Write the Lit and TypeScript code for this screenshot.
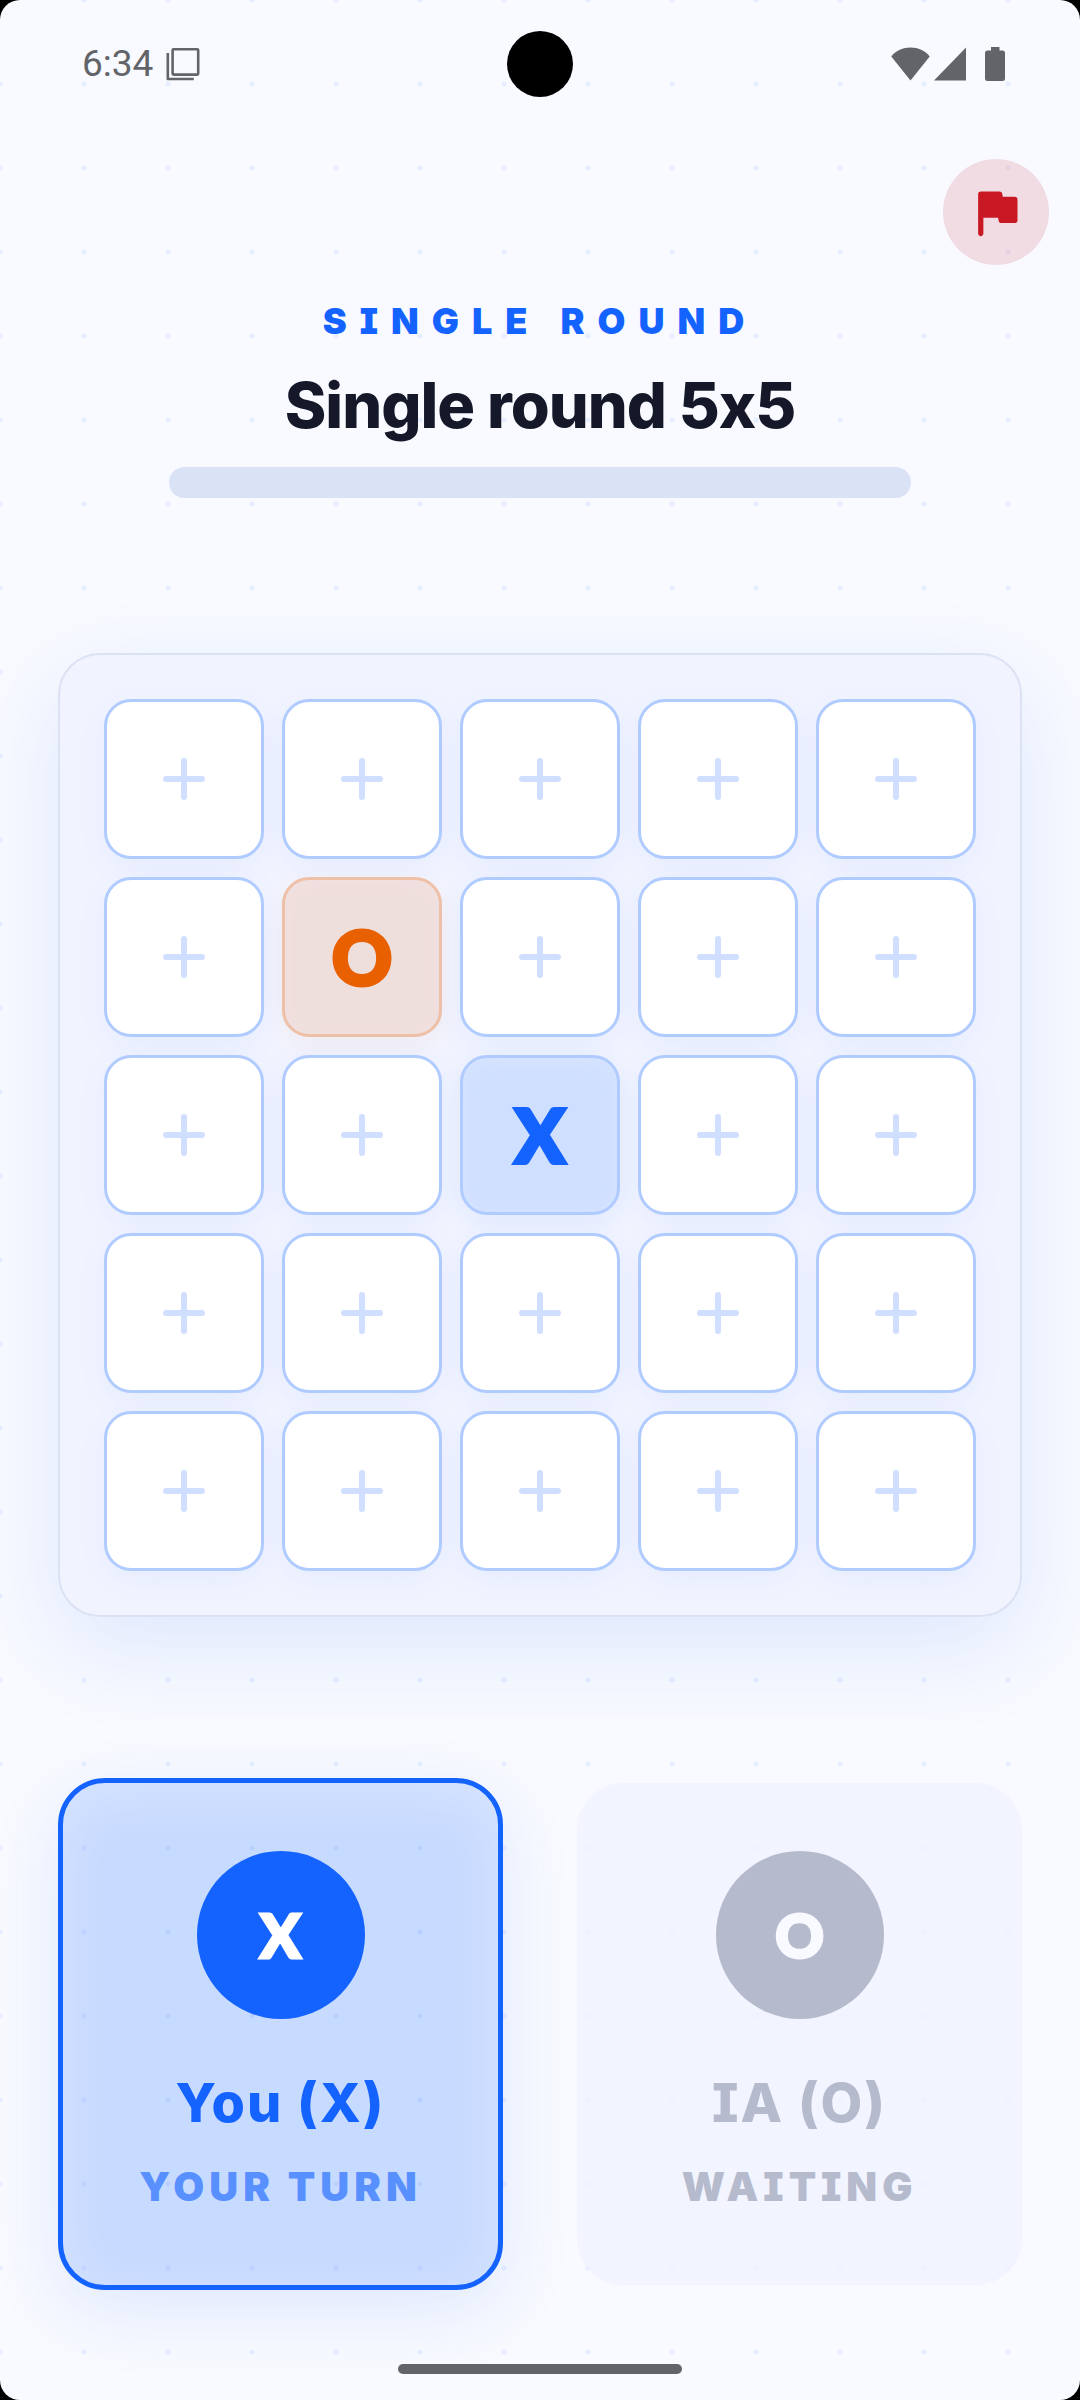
import { LitElement, html, css, svg } from "lit";
import { customElement, property, state } from "lit/decorators.js";
import { classMap } from "lit/directives/class-map.js";

type Mark = "X" | "O" | "";

const SIZE = 5;

@customElement("status-bar")
export class StatusBar extends LitElement {
  static styles = css`
    :host {
      display: grid;
      grid-template-columns: 1fr auto 1fr;
      align-items: center;
      height: 128px;
      padding: 0 75px;
      box-sizing: border-box;
      color: #636469;
      font: 400 37px/44px Roboto, "Liberation Sans", sans-serif;
    }
    .side {
      display: flex;
      align-items: center;
      gap: 13px;
      padding-left: 7px;
    }
    .right {
      justify-content: flex-end;
      gap: 0;
      padding: 0;
    }
    .camera {
      width: 66px;
      height: 66px;
      border-radius: 50%;
      background: #000;
    }
    svg {
      display: block;
      fill: currentColor;
    }
    .signal {
      margin-left: 4px;
    }
    .battery {
      margin-left: 19px;
    }
  `;

  render() {
    return html`
      <div class="side">
        <span>6:34</span>
        <svg width="34" height="34" viewBox="0 0 34 34" aria-hidden="true">
          <g fill="none" stroke="currentColor" stroke-width="2.6" stroke-linejoin="round">
            <rect x="6.6" y="2.2" width="25.6" height="25.4" rx="1" />
            <path d="M1.8 6v26h26" />
          </g>
        </svg>
      </div>
      <div class="camera"></div>
      <div class="side right">
        <svg width="39" height="34" viewBox="0 0 39 34" aria-hidden="true">
          <path d="M19.500 33.500L.3 9.500C5 3.500 12 .6 19.500 .6S34 3.500 38.700 9.500z" />
        </svg>
        <svg class="signal" width="32" height="34" viewBox="0 0 32 34" aria-hidden="true">
          <path d="M32 .5V33.500H0z" />
        </svg>
        <svg class="battery" width="20" height="34" viewBox="0 0 20 34" aria-hidden="true">
          <path d="M6 0h8.500v3.500H17.500A2.500 2.500 0 0 1 20 6v25.500A2.500 2.500 0 0 1 17.500 34h-15A2.500 2.500 0 0 1 0 31.500V6a2.500 2.500 0 0 1 2.500-2.500H6z" />
        </svg>
      </div>
    `;
  }
}

@customElement("game-board")
export class GameBoard extends LitElement {
  @property({ attribute: false }) cells: Mark[] = [];

  static styles = css`
    :host {
      display: block;
    }
    .board {
      display: grid;
      grid-template-columns: repeat(5, 1fr);
      gap: 18px;
      padding: 44px;
      border: 2px solid #dbe2f4;
      border-radius: 42px;
      background: #f1f4ff;
      box-shadow: 0 31px 96px rgba(20, 80, 240, 0.11);
    }
    .cell {
      display: flex;
      align-items: center;
      justify-content: center;
      aspect-ratio: 1;
      min-width: 0;
      margin: 0;
      padding: 0;
      border: 3px solid #b0cbff;
      border-radius: 27px;
      background: #fff;
      box-shadow: 0 8px 32px rgba(20, 80, 240, 0.05);
      font: 900 74px/76px Lato, "Liberation Sans", sans-serif;
      -webkit-text-stroke: 4px currentColor;
    }
    .x {
      color: #1463ff;
      background: #cfdfff;
      box-shadow: 0 8px 28px rgba(20, 99, 255, 0.08), inset 0 4px 20px #d8e5ff;
    }
    .o {
      color: #e86000;
      background: #efdfdc;
      border-color: #efc0a8;
      box-shadow: 0 8px 28px rgba(232, 96, 0, 0.06), inset 0 4px 14px #f1e0e2;
    }
    .plus {
      display: block;
      stroke: #d0dfff;
      stroke-width: 6;
      stroke-linecap: round;
    }
  `;

  private pick(index: number) {
    this.dispatchEvent(new CustomEvent("pick", { detail: index }));
  }

  render() {
    return html`
      <div class="board">
        ${this.cells.map(
          (mark, i) => html`
            <button
              type="button"
              class=${classMap({ cell: true, x: mark === "X", o: mark === "O" })}
              aria-label=${`Row ${Math.floor(i / SIZE) + 1}, column ${(i % SIZE) + 1}${mark ? `, ${mark}` : ""}`}
              @click=${() => this.pick(i)}
            >
              ${mark ||
              html`<svg class="plus" width="42" height="42" viewBox="0 0 42 42" aria-hidden="true">
                ${svg`<path d="M21 3v36M3 21h36" />`}
              </svg>`}
            </button>
          `
        )}
      </div>
    `;
  }
}

@customElement("player-card")
export class PlayerCard extends LitElement {
  @property() mark: Mark = "X";
  @property() name = "";
  @property() status = "";
  @property({ type: Boolean }) active = false;

  static styles = css`
    :host {
      display: block;
    }
    .card {
      display: flex;
      flex-direction: column;
      align-items: center;
      padding: 68px 20px 72px;
      border-radius: 47px;
      background: rgba(240, 243, 255, 0.88);
      color: #b5bacd;
      font-family: Inter, "Liberation Sans", sans-serif;
      font-feature-settings: "cv08";
      white-space: nowrap;
    }
    .active {
      border: 5px solid #1463ff;
      padding-left: 15px;
      padding-right: 15px;
      background: rgba(20, 99, 255, 0.21);
      background-clip: padding-box;
      color: #1463ff;
      box-shadow: 0 21px 72px rgba(20, 80, 240, 0.1),
        inset 0 14px 60px rgba(255, 255, 255, 0.28);
    }
    .disc {
      display: flex;
      align-items: center;
      justify-content: center;
      width: 168px;
      height: 168px;
      border-radius: 50%;
      background: #b5bacd;
      color: #f8faff;
      font-family: Lato, "Liberation Sans", sans-serif;
      font-size: 60px;
      line-height: 64px;
      font-weight: 900;
      -webkit-text-stroke: 3px currentColor;
    }
    .active .disc {
      background: #1463ff;
      color: #fff;
    }
    .name {
      margin-top: 50px;
      font-size: 54px;
      line-height: 68px;
      font-weight: 800;
      letter-spacing: 2px;
    }
    .status {
      margin-top: 24px;
      font-size: 40px;
      line-height: 52px;
      font-weight: 900;
      letter-spacing: 5px;
    }
    .active .status {
      color: #5990ff;
    }
  `;

  render() {
    return html`
      <section class=${classMap({ card: true, active: this.active })}>
        <div class="disc">${this.mark}</div>
        <div class="name">${this.name}</div>
        <div class="status">${this.status}</div>
      </section>
    `;
  }
}

@customElement("app-root")
export class AppRoot extends LitElement {
  @state() private cells: Mark[] = Array.from({ length: SIZE * SIZE }, (_, i) =>
    i === 6 ? "O" : i === 12 ? "X" : ""
  );

  static styles = css`
    :host {
      display: block;
      background: #000;
    }
    .screen {
      display: flex;
      flex-direction: column;
      min-height: 100vh;
      box-sizing: border-box;
      padding-bottom: 26px;
      border-radius: 20px;
      overflow: hidden;
      background: radial-gradient(circle, #e6eeff 2px, transparent 3px) -42px -42px / 84px 84px #f8faff;
      font-family: Inter, "Liberation Sans", sans-serif;
    }
    .toolbar {
      display: flex;
      justify-content: flex-end;
      padding: 31px 31px 0;
    }
    .resign {
      display: flex;
      align-items: center;
      justify-content: center;
      width: 106px;
      height: 106px;
      padding: 0;
      border: 0;
      border-radius: 50%;
      background: rgba(200, 24, 36, 0.13);
    }
    .resign svg {
      display: block;
      fill: #c81824;
    }
    .heading {
      display: flex;
      flex-direction: column;
      align-items: center;
      gap: 24px;
      padding: 34px 169px 0;
      text-align: center;
    }
    .eyebrow {
      margin: 0;
      color: #1463ff;
      font-size: 36px;
      line-height: 44px;
      font-weight: 900;
      letter-spacing: 13px;
      font-feature-settings: "cv08";
    }
    h1 {
      margin: 0;
      color: #141828;
      font-size: 63px;
      line-height: 76px;
      font-weight: 800;
      letter-spacing: -1px;
      white-space: nowrap;
    }
    .track {
      align-self: stretch;
      height: 31px;
      border-radius: 16px;
      background: #dae3f6;
    }
    game-board {
      margin: 155px 58px 0;
    }
    .players {
      display: grid;
      grid-template-columns: 1fr 1fr;
      align-items: center;
      gap: 74px;
      margin: 161px 58px 0;
    }
    .home {
      width: 284px;
      height: 10px;
      margin: auto auto 0;
      border-radius: 5px;
      background: #636469;
    }
  `;

  private play(event: CustomEvent<number>) {
    if (this.cells[event.detail]) return;
    this.cells = this.cells.map((mark, i) => (i === event.detail ? "X" : mark));
  }

  render() {
    return html`
      <div class="screen">
        <status-bar></status-bar>
        <div class="toolbar">
          <button type="button" class="resign" aria-label="Resign">
            <svg width="63" height="63" viewBox="0 0 24 24" aria-hidden="true">
              <path
                d="M14.4 6l-.24-1.2c-.09-.46-.5-.8-.98-.8H6c-.55 0-1 .45-1 1v15c0 .55.45 1 1 1s1-.45 1-1v-6h5.600l.24 1.200c.09.470.5.800.98.800H19c.55 0 1-.45 1-1V7c0-.55-.45-1-1-1h-4.600z"
              />
            </svg>
          </button>
        </div>
        <header class="heading">
          <p class="eyebrow">SINGLE ROUND</p>
          <h1>Single round 5x5</h1>
          <div class="track"></div>
        </header>
        <game-board .cells=${this.cells} @pick=${this.play}></game-board>
        <div class="players">
          <player-card mark="X" name="You (X)" status="YOUR TURN" active></player-card>
          <player-card mark="O" name="IA (O)" status="WAITING"></player-card>
        </div>
        <div class="home"></div>
      </div>
    `;
  }
}
